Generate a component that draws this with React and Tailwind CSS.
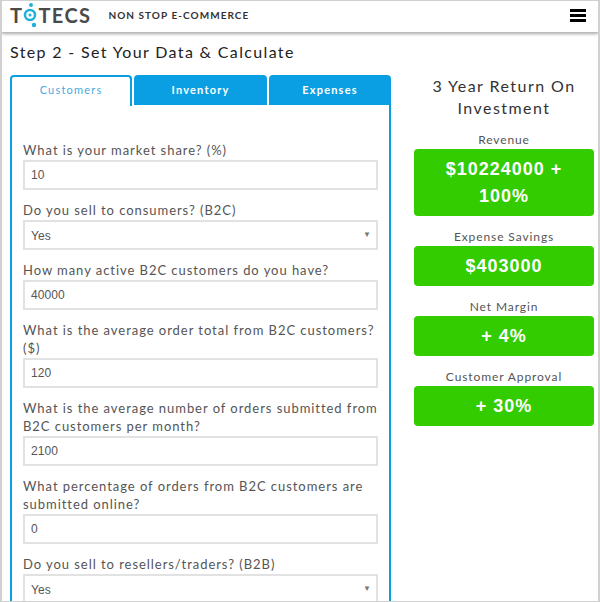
const fields = [
  { label: 'What is your market share? (%)', value: '10' },
  { label: 'Do you sell to consumers? (B2C)', value: 'Yes', select: true },
  { label: 'How many active B2C customers do you have?', value: '40000' },
  { label: 'What is the average order total from B2C customers? ($)', value: '120' },
  { label: 'What is the average number of orders submitted from B2C customers per month?', value: '2100' },
  { label: 'What percentage of orders from B2C customers are submitted online?', value: '0' },
  { label: 'Do you sell to resellers/traders? (B2B)', value: 'Yes', select: true },
];

const results = [
  { label: 'Revenue', value: '$10224000 + 100%', tall: true },
  { label: 'Expense Savings', value: '$403000' },
  { label: 'Net Margin', value: '+ 4%' },
  { label: 'Customer Approval', value: '+ 30%' },
];

const Logo = () => (
  <div className="flex items-center text-[20px] font-bold leading-none tracking-[1.4px] text-[#4a4a4a]">
    <span>T</span>
    <svg width="17" height="28" viewBox="0 0 17 28" className="mx-[-1px]">
      <circle cx="8" cy="14" r="5" fill="none" stroke="#1fb0e0" strokeWidth="2.5" />
      <circle cx="8" cy="14" r="1.5" fill="#1fb0e0" />
      <circle cx="9" cy="4" r="2" fill="#1fb0e0" />
      <circle cx="12" cy="24" r="2.2" fill="#1fb0e0" />
    </svg>
    <span>TECS</span>
  </div>
);

const Field = ({ label, value, select }) => (
  <div className="mb-[11px]">
    <label className="block text-[13px] leading-[18px] tracking-[0.95px] text-[#555]">{label}</label>
    <div className="mt-px flex h-[30px] items-center justify-between border-2 border-[#e2e2e2] bg-white pl-[6px] pr-[5px] font-['Liberation_Sans',sans-serif] text-[12px] tracking-[0.1px] text-[#555]">
      <span className={select ? 'pt-px' : ''}>{value}</span>
      {select && <span className="text-[8px] text-[#777]">▼</span>}
    </div>
  </div>
);

const App = () => {
  return (
    <div className="h-[602px] w-[600px] overflow-hidden border-x-2 border-y border-[#d0d0d0] bg-white font-['Lato',sans-serif]">
      {/* Header */}
      <header className="flex h-[32px] items-center justify-between border-b border-[#bbb] bg-white pb-[3px] pl-2 pr-[12px] shadow-[0_1px_3px_rgba(0,0,0,0.35)]">
        <div className="flex items-center gap-[17px]">
          <Logo />
          <span className="text-[10px] font-bold tracking-[1.05px] text-[#333]">NON STOP E-COMMERCE</span>
        </div>
        <div className="flex w-[16px] flex-col gap-[2px]">
          <span className="h-[3px] bg-black" />
          <span className="h-[3px] bg-black" />
          <span className="h-[3px] bg-black" />
        </div>
      </header>

      <h1 className="pl-2 pt-[9px] text-[16px] leading-[20px] tracking-[1.35px] text-[#222]">
        Step 2 - Set Your Data &amp; Calculate
      </h1>

      <div className="mt-[13px] flex items-start pl-2">
        {/* Left column */}
        <div className="w-[381px] shrink-0">
          <div className="flex h-[30px] gap-[2px] text-[11px] tracking-[1.2px]">
            <div className="z-10 flex h-[31px] w-[122px] items-center justify-center rounded-t border-x-2 border-t-2 border-[#0a9fe2] bg-white pb-[2px] text-[#4aa9e0]">
              Customers
            </div>
            <div className="flex w-[133px] items-center justify-center rounded-t bg-[#0a9fe2] font-bold text-white">
              Inventory
            </div>
            <div className="flex flex-1 items-center justify-center rounded-t bg-[#0a9fe2] font-bold text-white">
              Expenses
            </div>
          </div>
          <div className="border-x-2 border-[#0a9fe2] px-[11px] pt-[36px]">
            {fields.map((f) => (
              <Field key={f.label} {...f} />
            ))}
          </div>
        </div>

        {/* Right column */}
        <div className="ml-[23px] w-[180px] shrink-0 text-center">
          <h2 className="text-[16px] leading-[22px] tracking-[1.45px] text-[#333]">3 Year Return On Investment</h2>
          <div className="mt-[12px]">
            {results.map((r) => (
              <div key={r.label} className="mb-[12px]">
                <div className="text-[12px] leading-[18px] tracking-[0.9px] text-[#555]">{r.label}</div>
                <div
                  className={
                    r.tall
                      ? "flex h-[67px] items-center justify-center rounded bg-[#33cc00] px-3 font-['Liberation_Sans',sans-serif] text-[18px] font-bold leading-[27px] tracking-[1px] text-white"
                      : "flex h-[40px] items-center justify-center rounded bg-[#33cc00] px-3 font-['Liberation_Sans',sans-serif] text-[18px] font-bold tracking-[1px] text-white"
                  }
                >
                  {r.value}
                </div>
              </div>
            ))}
          </div>
        </div>
      </div>
    </div>
  );
};

export default App;
